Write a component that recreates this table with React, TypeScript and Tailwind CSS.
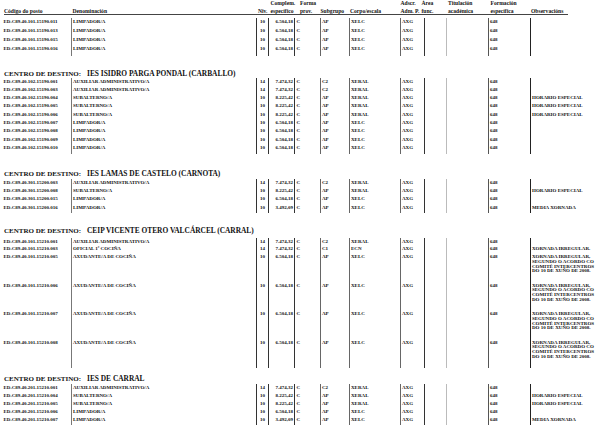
import React from "react";

type Row = { c: string[]; obs?: string[]; h: string };

const cellCls = [
  "w-[71px] pl-[3.5px]",
  "w-[185px] border-l border-[#777] pl-[1px]",
  "w-[13px] border-x border-[#333] text-center",
  "w-[26px] border-r border-[#333] text-right pr-[1px]",
  "w-[25px] pl-[1.5px]",
  "w-[29px] border-l border-[#666] pl-[1px]",
  "w-[51px] border-l border-[#666] pl-[1px]",
  "w-[24px] border-l border-[#666] pl-[1px]",
  "w-[22px] border-l-[1.5px] border-[#333]",
  "w-[42px] border-l border-[#bbb]",
  "w-[42px] border-l border-[#555] pl-[1px]",
  "w-[85px] border-l-[1.5px] border-[#222] pl-[1px]",
];

const LIMP = (code: string, h: string, obs?: string[], val = "6.504,18"): Row => ({
  c: [code, "LIMPADOR/A", "10", val, "C", "AP", "XELC", "AXG", "", "", "648"],
  obs,
  h,
});
const AUX = (code: string, h: string): Row => ({
  c: [code, "AUXILIAR ADMINISTRATIVO/A", "14", "7.474,32", "C", "C2", "XERAL", "AXG", "", "", "648"],
  h,
});
const SUB = (code: string, h: string): Row => ({
  c: [code, "SUBALTERNO/A", "10", "8.225,42", "C", "AP", "XERAL", "AXG", "", "", "648"],
  obs: ["HORARIO ESPECIAL"],
  h,
});
const LONG = ["XORNADA IRREGULAR,", "SEGUNDO O ACORDO CO", "COMITÉ INTERCENTROS", "DO 10 DE XUÑO DE 2008."];
const AXU = (code: string, h: string): Row => ({
  c: [code, "AXUDANTE/A DE COCIÑA", "10", "6.504,18", "C", "AP", "XELC", "AXG", "", "", "648"],
  obs: LONG,
  h,
});

type Section = { title?: string; titleMt: string; tableMt: string; rows: Row[]; filler: string };

const sections: Section[] = [
  {
    titleMt: "",
    tableMt: "mt-[3px]",
    filler: "h-[1.5px]",
    rows: [
      LIMP("ED.C89.40.101.15190.011", "h-[9px]"),
      LIMP("ED.C89.40.101.15190.013", "h-[9px]"),
      LIMP("ED.C89.40.101.15190.015", "h-[9px]"),
      LIMP("ED.C89.40.101.15190.016", "h-[9px]"),
    ],
  },
  {
    title: "IES ISIDRO PARGA PONDAL (CARBALLO)",
    titleMt: "mt-[14.5px]",
    tableMt: "mt-0",
    filler: "h-[1px]",
    rows: [
      AUX("ED.C89.40.102.15190.001", "h-[8.3px]"),
      AUX("ED.C89.40.102.15190.003", "h-[8.3px]"),
      SUB("ED.C89.40.102.15190.004", "h-[8.3px]"),
      SUB("ED.C89.40.102.15190.005", "h-[8.3px]"),
      SUB("ED.C89.40.102.15190.006", "h-[8.3px]"),
      LIMP("ED.C89.40.102.15190.007", "h-[8.3px]"),
      LIMP("ED.C89.40.102.15190.008", "h-[8.3px]"),
      LIMP("ED.C89.40.102.15190.009", "h-[8.3px]"),
      LIMP("ED.C89.40.102.15190.010", "h-[8.3px]"),
    ],
  },
  {
    title: "IES LAMAS DE CASTELO (CARNOTA)",
    titleMt: "mt-[16.3px]",
    tableMt: "mt-[1px]",
    filler: "h-[1px]",
    rows: [
      AUX("ED.C89.40.301.15200.003", "h-[8.33px]"),
      SUB("ED.C89.40.301.15200.008", "h-[8.33px]"),
      LIMP("ED.C89.40.301.15200.015", "h-[8.33px]"),
      LIMP("ED.C89.40.301.15200.016", "h-[8.33px]", ["MEDIA XORNADA"], "3.492,09"),
    ],
  },
  {
    title: "CEIP VICENTE OTERO VALCÁRCEL (CARRAL)",
    titleMt: "mt-[13.7px]",
    tableMt: "mt-[3px]",
    filler: "h-0",
    rows: [
      AUX("ED.C89.40.101.15210.001", "h-[7.5px]"),
      {
        c: ["ED.C89.40.101.15210.003", "OFICIAL 1ª COCIÑA", "14", "7.474,32", "C", "C1", "ECN", "AXG", "", "", "648"],
        obs: ["XORNADA IRREGULAR."],
        h: "h-[8px]",
      },
      AXU("ED.C89.40.101.15210.005", "h-[28.5px]"),
      AXU("ED.C89.40.101.15210.006", "h-[28.5px]"),
      AXU("ED.C89.40.101.15210.007", "h-[28.5px]"),
      AXU("ED.C89.40.101.15210.008", "h-[29px]"),
    ],
  },
  {
    title: "IES DE CARRAL",
    titleMt: "mt-[7px]",
    tableMt: "mt-[1px]",
    filler: "h-[1px]",
    rows: [
      AUX("ED.C89.40.201.15210.001", "h-[8.1px]"),
      SUB("ED.C89.40.201.15210.004", "h-[8.1px]"),
      SUB("ED.C89.40.201.15210.005", "h-[8.1px]"),
      LIMP("ED.C89.40.201.15210.006", "h-[8.1px]"),
      LIMP("ED.C89.40.201.15210.007", "h-[8.1px]", ["MEDIA XORNADA"], "3.492,09"),
    ],
  },
];

function TRow({ r }: { r: Row }) {
  return (
    <div className={`flex ${r.h}`}>
      {cellCls.map((cls, i) => (
        <div key={i} className={`${cls} shrink-0 whitespace-nowrap pt-[1.6px]`}>
          {i < 11 ? r.c[i] : r.obs ? r.obs.map((l, k) => <div key={k}>{l}</div>) : null}
        </div>
      ))}
    </div>
  );
}

function Filler({ h }: { h: string }) {
  return (
    <div className={`flex ${h}`}>
      {cellCls.map((cls, i) => (
        <div key={i} className={`${cls} shrink-0`} />
      ))}
    </div>
  );
}

function Two({ a, b, w }: { a: string; b: string; w: string }) {
  return (
    <div className={`${w} flex shrink-0 flex-col whitespace-nowrap`}>
      <span className="mb-[2px]">{a}</span>
      <span>{b}</span>
    </div>
  );
}

export default function App() {
  return (
    <div className="h-[439px] w-[615px] overflow-hidden bg-white font-['Liberation_Serif',serif] font-bold text-[#111]">
      <div className="ml-[4px] flex h-[15px] w-[564px] items-end border-b border-[#444] text-[5.6px] leading-[6px]">
        <div className="w-[68.5px] shrink-0">Código do posto</div>
        <div className="w-[185.5px] shrink-0">Denominación</div>
        <div className="w-[12.5px] shrink-0">Niv.</div>
        <Two a="Complem." b="específico" w="w-[29.5px]" />
        <Two a="Forma" b="prov." w="w-[20.5px]" />
        <div className="w-[29.5px] shrink-0">Subgrupo</div>
        <div className="w-[50.5px] shrink-0">Corpo/escala</div>
        <Two a="Adscr." b="Adm. P." w="w-[21px]" />
        <Two a="Área" b="func." w="w-[26.5px]" />
        <Two a="Titulación" b="académica" w="w-[42.5px]" />
        <Two a="Formación" b="específica" w="w-[40.5px]" />
        <div className="shrink-0">Observacións</div>
      </div>
      {sections.map((s, si) => (
        <div key={si}>
          {s.title && (
            <div className={`${s.titleMt} flex h-[8px] items-center whitespace-nowrap pl-[4px] leading-[8px]`}>
              <span className="w-[83px] shrink-0 text-[7px]">CENTRO DE DESTINO:</span>
              <span className="text-[7.4px]">{s.title}</span>
            </div>
          )}
          <div className={`${s.tableMt} text-[5px] leading-[4.8px]`}>
            {s.rows.map((r, ri) => (
              <TRow key={ri} r={r} />
            ))}
            <Filler h={s.filler} />
          </div>
        </div>
      ))}
    </div>
  );
}
